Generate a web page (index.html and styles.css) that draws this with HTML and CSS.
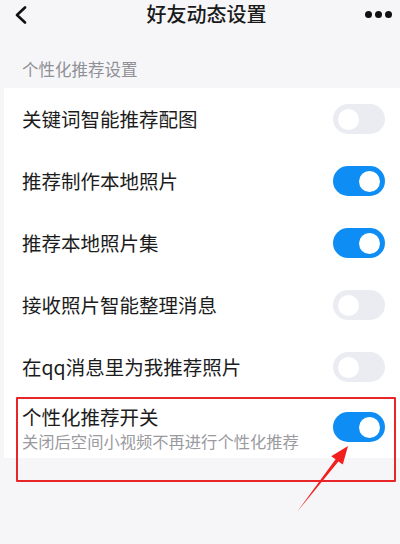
FILE: index.html
```html
<!DOCTYPE html>
<html lang="zh">
<head>
<meta charset="utf-8">
<link rel="stylesheet" href="styles.css">
</head>
<body>
<div class="page">
  <header class="topbar">
    <span class="back">
      <svg width="14" height="18" viewBox="0 0 14 18"><path d="M11 1.5 L3 9 L11 16.5" fill="none" stroke="#111" stroke-width="2.6" stroke-linecap="round" stroke-linejoin="round"/></svg>
    </span>
    <h1 class="title">好友动态设置</h1>
    <span class="more"><i></i><i></i><i></i></span>
  </header>
  <div class="section-title">个性化推荐设置</div>
  <div class="card">
    <div class="row"><span class="label">关键词智能推荐配图</span><span class="switch"></span></div>
    <div class="row"><span class="label">推荐制作本地照片</span><span class="switch on"></span></div>
    <div class="row"><span class="label">推荐本地照片集</span><span class="switch on"></span></div>
    <div class="row"><span class="label">接收照片智能整理消息</span><span class="switch"></span></div>
    <div class="row"><span class="label">在qq消息里为我推荐照片</span><span class="switch"></span></div>
    <div class="row row-two">
      <div class="texts">
        <span class="label">个性化推荐开关</span>
        <span class="sub">关闭后空间小视频不再进行个性化推荐</span>
      </div>
      <span class="switch on"></span>
    </div>
  </div>
  <div class="highlight"></div>
  <svg class="arrow" width="400" height="544" viewBox="0 0 400 544">
    <polygon points="297,512 335.6,459.2 331.2,456.2 348,446 342.8,464.6 338.4,461.4" fill="#f21f1f"/>
  </svg>
</div>
</body>
</html>
```
FILE: styles.css
```css
html, body {
  margin: 0;
  padding: 0;
}
body {
  background: #f6f6f8;
  font-family: "Noto Sans CJK SC", "Noto Sans", sans-serif;
}
.page {
  position: relative;
  width: 400px;
  height: 544px;
  overflow: hidden;
  background: #f6f6f8;
}
.topbar {
  height: 28px;
  display: grid;
  grid-template-columns: 1fr auto 1fr;
  align-items: center;
  padding: 0 7px 0 14px;
}
.back {
  display: flex;
  align-items: center;
  padding-top: 1px;
}
.title {
  margin: 0;
  font-size: 20px;
  font-weight: 500;
  color: #1a1a1a;
  line-height: 26px;
  padding-left: 6px;
}
.more {
  justify-self: end;
  display: flex;
  gap: 3px;
  padding-right: 1px;
}
.more i {
  display: block;
  width: 7px;
  height: 7px;
  border-radius: 50%;
  background: #111;
}
.section-title {
  padding: 30px 0 8px 22px;
  font-size: 16.5px;
  line-height: 22px;
  color: #8f9096;
}
.card {
  margin-left: 4px;
  background: #fff;
}
.row {
  height: 62px;
  display: flex;
  align-items: center;
  justify-content: space-between;
  padding: 0 15px 0 18px;
}
.label {
  font-size: 19.5px;
  color: #1c1c1c;
  line-height: 24px;
}
.row-two {
  height: 60px;
  align-items: flex-start;
  padding-top: 7px;
  box-sizing: border-box;
}
.texts {
  display: flex;
  flex-direction: column;
  gap: 2px;
}
.sub {
  font-size: 16.3px;
  line-height: 21px;
  color: #9a9a9f;
}
.row-two .switch {
  margin-top: 7px;
}
.switch {
  position: relative;
  flex: none;
  width: 52px;
  height: 30px;
  border-radius: 15px;
  background: #ebecf1;
}
.switch::after {
  content: "";
  position: absolute;
  top: 4.5px;
  left: 5px;
  width: 21px;
  height: 21px;
  border-radius: 50%;
  background: #fff;
}
.switch.on {
  background: #0e8ef4;
}
.switch.on::after {
  left: auto;
  right: 5px;
}
.highlight {
  position: absolute;
  left: 16px;
  top: 397px;
  width: 380px;
  height: 85px;
  box-sizing: border-box;
  border: 2px solid #e8262a;
  border-radius: 1px;
}
.arrow {
  position: absolute;
  left: 0;
  top: 0;
}
```
